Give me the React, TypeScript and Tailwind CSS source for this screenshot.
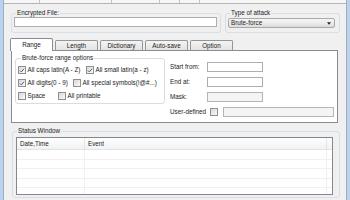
import React from 'react'

function Check({ checked }: { checked?: boolean }) {
  return (
    <span className="w-[8px] h-[8px] shrink-0 border border-[#8e8f8f] bg-linear-to-br from-[#d8d8d8] to-[#fbfbfb] flex items-center justify-center">
      {checked && (
        <svg viewBox="0 0 8 8" className="w-[7px] h-[7px]">
          <path d="M1.3 4.1 L3.1 5.9 L6.7 1.7" fill="none" stroke="#3b5796" strokeWidth="1.3" />
        </svg>
      )}
    </span>
  )
}

function Option({ label, checked, width }: { label: string; checked?: boolean; width?: string }) {
  return (
    <div className={`flex items-center gap-[1.5px] shrink-0 ${width ?? ''}`}>
      <Check checked={checked} />
      <span className="whitespace-nowrap">{label}</span>
    </div>
  )
}

const tabs = ['Range', 'Length', 'Dictionary', 'Auto-save', 'Option']

export default function App() {
  return (
    <div className="w-[350px] h-[200px] flex overflow-hidden bg-[#f0f0f0] text-[6.3px] leading-[8px] text-[#1b1b1b] font-['Liberation_Sans',Arial,sans-serif]">
      <div className="w-[4px] shrink-0 bg-[#bcd2ea] border-r border-[#98aecb]" />

      <div className="flex-1 flex flex-col min-w-0">
        {/* bottom edge of the toolbar above */}
        <div className="h-[4px] flex border-b border-[#b4b4b4] bg-[#f6f6f6]">
          <span className="w-[36px] border-r border-[#c4c4c4]" />
          <span className="w-[72px] border-r border-[#c4c4c4]" />
          <span className="w-[48px] border-r border-[#c4c4c4]" />
          <span className="w-[20px] border-r border-[#c4c4c4]" />
          <span className="w-[20px] border-r border-[#c4c4c4]" />
        </div>

        <div className="flex mt-[5px] pl-[7px] pr-[6px] gap-[4px]">
          <fieldset className="w-[210px] border border-[#d5dfe5] rounded-[3px] pl-[2px] pr-[3px] pb-[5px]">
            <legend className="ml-[2px] px-[1px] leading-[8px]">Encrypted File:</legend>
            <div className="h-[10px] border border-[#abadb3] bg-white" />
          </fieldset>
          <fieldset className="flex-1 border border-[#d5dfe5] rounded-[3px] pl-[2px] pr-[4px] pt-[1px] pb-[4px]">
            <legend className="ml-[2px] px-[1px] leading-[8px]">Type of attack</legend>
            <div className="h-[10px] flex items-center justify-between border border-[#a9a9a9] rounded-[2px] bg-linear-to-b from-[#f5f5f5] via-[#ececec] to-[#dadada] pl-[2px] pr-[3px]">
              <span>Brute-force</span>
              <svg viewBox="0 0 5 3" className="w-[4px] h-[3px]">
                <path d="M0 0 H5 L2.5 3 Z" fill="#222" />
              </svg>
            </div>
          </fieldset>
        </div>

        {/* tabs */}
        <div className="flex items-end gap-[2px] pl-[6px] mt-[5px] h-[12px]">
          {tabs.map((t, i) =>
            i === 0 ? (
              <div
                key={t}
                className="relative z-10 -mb-px h-[13px] w-[43px] flex items-center justify-center bg-white border border-b-0 border-[#898c95] rounded-t-[2px]"
              >
                {t}
              </div>
            ) : (
              <div
                key={t}
                className="h-[10px] w-[43px] flex items-center justify-center bg-linear-to-b from-[#f4f4f4] to-[#e3e3e3] border border-b-0 border-[#959595] rounded-t-[2px]"
              >
                {t}
              </div>
            )
          )}
        </div>

        <div className="ml-[7px] mr-[8px] h-[73px] border border-[#898c95] bg-white flex pt-[3px] pl-[3px] pr-[3px]">
          <fieldset className="w-[150px] self-start border border-[#dcdcdc] rounded-[3px] pl-[2px] pb-[3px]">
            <legend className="ml-[3px] px-[1px] leading-[8px]">Brute-force range options</legend>
            <div className="flex flex-col gap-[5px] mt-[4px]">
              <div className="flex items-center h-[8px]">
                <Option label="All caps latin(A - Z)" checked width="w-[68px]" />
                <Option label="All small latin(a - z)" checked />
              </div>
              <div className="flex items-center h-[8px]">
                <Option label="All digits(0 - 9)" checked width="w-[55px]" />
                <Option label="All special symbols(!@#...)" />
              </div>
              <div className="flex items-center h-[8px]">
                <Option label="Space" width="w-[40px]" />
                <Option label="All printable" />
              </div>
            </div>
          </fieldset>

          <div className="flex-1 ml-[5px] mt-[8px] flex flex-col gap-[5px]">
            <div className="flex items-center h-[10px]">
              <span className="w-[37px] shrink-0">Start from:</span>
              <div className="w-[56px] h-[10px] border border-[#abadb3] bg-white" />
            </div>
            <div className="flex items-center h-[10px]">
              <span className="w-[37px] shrink-0">End at:</span>
              <div className="w-[56px] h-[10px] border border-[#abadb3] bg-white" />
            </div>
            <div className="flex items-center h-[10px]">
              <span className="w-[37px] shrink-0">Mask:</span>
              <div className="w-[56px] h-[10px] border border-[#b5b5b5] bg-[#f4f4f4]" />
            </div>
            <div className="flex items-center h-[10px]">
              <span className="w-[37px] shrink-0">User-defined</span>
              <span className="ml-[3px]">
                <Check />
              </span>
              <div className="flex-1 ml-[5px] h-[10px] border border-[#b5b5b5] bg-[#f4f4f4]" />
            </div>
          </div>
        </div>

        <fieldset className="mt-[4px] ml-[8px] mr-[6px] border border-[#d5dfe5] rounded-[3px] pl-[3px] pr-[6px] pt-[2px] pb-[2px]">
          <legend className="ml-[1px] px-[1px] leading-[8px]">Status Window</legend>
          <div className="h-[58px] border border-[#828790] bg-white flex flex-col overflow-hidden">
            <div className="h-[12px] shrink-0 flex bg-linear-to-b from-white to-[#f1f2f4] border-b border-[#e2e3e5]">
              <div className="w-[68px] pl-[3px] flex items-center border-r border-[#e3e4e6]">Date,Time</div>
              <div className="w-[242px] pl-[3px] flex items-center border-r border-[#e3e4e6]">Event</div>
            </div>
            {[0, 1, 2, 3, 4].map((r) => (
              <div key={r} className="h-[9.5px] shrink-0 flex border-b border-[#f0f0f0]">
                <div className="w-[68px] border-r border-[#f0f0f0]" />
                <div className="w-[242px] border-r border-[#f0f0f0]" />
              </div>
            ))}
          </div>
        </fieldset>
      </div>

      <div className="w-[4px] shrink-0 bg-[#bcd2ea] border-l border-[#98aecb]" />
    </div>
  )
}
